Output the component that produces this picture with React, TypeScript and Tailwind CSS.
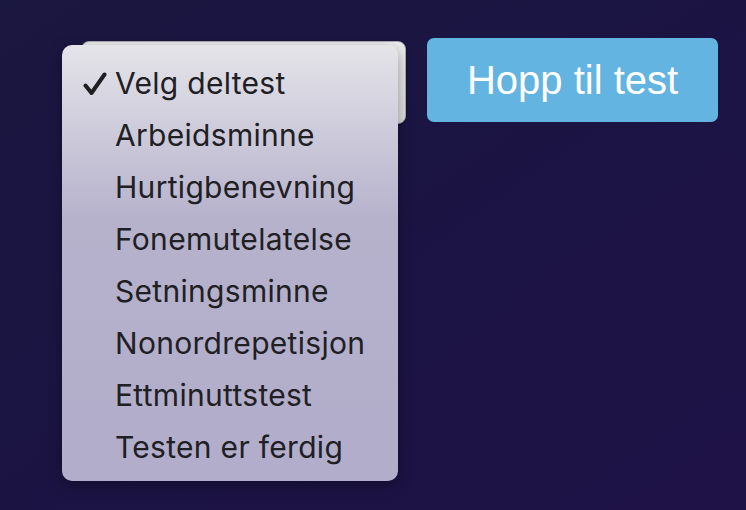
const items = [
  "Velg deltest",
  "Arbeidsminne",
  "Hurtigbenevning",
  "Fonemutelatelse",
  "Setningsminne",
  "Nonordrepetisjon",
  "Ettminuttstest",
  "Testen er ferdig",
];

const Check = () => (
  <svg viewBox="0 0 24 24" className="h-[24px] w-[24px]" fill="none">
    <path
      d="M2.5 13.5 L8.5 21 L21.5 2.5"
      stroke="#1f1f24"
      strokeWidth="4"
      strokeLinecap="round"
      strokeLinejoin="round"
    />
  </svg>
);

export default function App() {
  return (
    <div className="relative h-[510px] w-[746px] overflow-hidden bg-gradient-to-br from-[#1a1740] via-[#1b1443] to-[#1e1246]">
      <div className="flex items-start gap-[21px] pl-[81px] pt-[38px]">
        <div className="mt-[3px] h-[83px] w-[325px] rounded-[8px] border border-[#a9a9ad] bg-gradient-to-b from-[#ececee] to-[#dcdce0] shadow-[0_1px_2px_rgba(0,0,0,0.4)]" />
        <button className="flex h-[84px] w-[291px] items-center justify-center rounded-[7px] bg-[#64b4e1] font-['Liberation_Sans',Arial,sans-serif] text-[40px] text-white">
          Hopp til test
        </button>
      </div>

      <div className="absolute left-[62px] top-[45px] flex h-[436px] w-[336px] flex-col rounded-[10px] bg-gradient-to-b from-[#e5e4e9] via-[#b6b2cc] via-40% to-[#b1adca] pb-[7px] pt-[12px] shadow-[0_4px_14px_rgba(0,0,0,0.35)]">
        {items.map((item, i) => (
          <div
            key={item}
            className="flex h-[52px] items-center font-['Inter',sans-serif] text-[30px] tracking-[0.3px] text-[#202024]"
          >
            <span className="flex w-[53px] justify-end pr-[8px] pt-[2px]">
              {i === 0 && <Check />}
            </span>
            {item}
          </div>
        ))}
      </div>
    </div>
  );
}
